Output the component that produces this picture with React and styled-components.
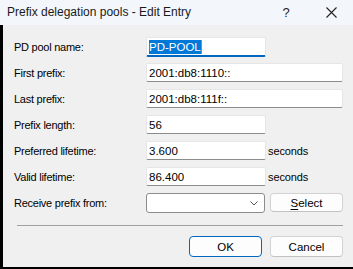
import React from "react";
import styled, { createGlobalStyle } from "styled-components";

const GlobalStyle = createGlobalStyle`
  html, body {
    margin: 0;
    padding: 0;
    background: #000;
  }
  body {
    font-family: "Liberation Sans", Arial, sans-serif;
    color: #000;
  }
`;

const Window = styled.div`
  width: 353px;
  height: 269px;
  display: flex;
  flex-direction: column;
  background: #000;
  overflow: hidden;
`;

const TitleBar = styled.div`
  height: 25px;
  display: flex;
  align-items: center;
  padding-left: 7px;
  background: #f3f6fb;
  color: #1a1a1a;
  font-size: 12px;
`;

const TitleText = styled.div`
  flex: 1;
  padding-bottom: 1px;
`;

const TitleButton = styled.div`
  width: ${({ $w }) => $w}px;
  display: flex;
  align-items: center;
  justify-content: center;
  font-size: 13px;
  color: #222;
  padding-bottom: 1px;
`;

const Body = styled.div`
  flex: 1;
  margin-left: 3px;
  margin-bottom: 2px;
  background: #f0f0f0;
  padding: 12px 10px 9px 11px;
  display: flex;
  flex-direction: column;
`;

const Form = styled.div`
  display: grid;
  grid-template-columns: 128px 120px 73px;
  column-gap: 4px;
  row-gap: 7px;
  grid-auto-rows: 19px;
  align-items: center;
`;

const Label = styled.div`
  font-size: 11px;
  letter-spacing: -0.25px;
  color: #000;
`;

const Field = styled.div`
  grid-column: ${({ $wide }) => ($wide ? "2 / span 2" : "2")};
  align-self: stretch;
  box-sizing: border-box;
  background: #fff;
  border: 1px solid #e6e6e6;
  border-bottom: ${({ $focus }) => ($focus ? "2px solid #0067c0" : "1px solid #8c8c8c")};
  border-radius: 2px;
  display: flex;
  align-items: center;
  padding-left: 2px;
  font-size: 11.5px;
  color: #000;
  height: ${({ $focus }) => ($focus ? "20px" : "19px")};
`;

const Selected = styled.span`
  background: #0078d7;
  color: #fff;
  line-height: 14px;
  border-right: 1px solid #e8742a;
`;

const Unit = styled.div`
  font-size: 11px;
  letter-spacing: -0.1px;
  margin-left: -2px;
`;

const Combo = styled.div`
  box-sizing: border-box;
  width: 119px;
  height: 20px;
  align-self: start;
  background: #fff;
  border: 1px solid #8c8c8c;
  border-radius: 3px;
  display: flex;
  align-items: center;
  justify-content: flex-end;
  padding-right: 6px;
`;

const Button = styled.div`
  box-sizing: border-box;
  width: 73px;
  height: ${({ $h }) => $h || 21}px;
  align-self: start;
  display: flex;
  align-items: center;
  justify-content: center;
  background: #fdfdfd;
  border: 1px solid ${({ $primary }) => ($primary ? "#0067c0" : "#d2d2d2")};
  border-bottom-color: ${({ $primary }) => ($primary ? "#0067c0" : "#c2c2c2")};
  border-radius: 4px;
  font-size: 11.5px;
  color: #000;
  u {
    text-decoration: underline;
    text-underline-offset: 2px;
  }
`;

const Separator = styled.div`
  height: 1px;
  background: #a0a0a0;
  margin: 13px 0 10px 3px;
`;

const Footer = styled.div`
  display: flex;
  justify-content: flex-end;
  gap: 8px;
`;

const Chevron = () => (
  <svg width="8" height="5" viewBox="0 0 8 5">
    <path d="M0.5 0.5 L4 4 L7.5 0.5" fill="none" stroke="#555" strokeWidth="1" />
  </svg>
);

const CloseIcon = () => (
  <svg width="11" height="11" viewBox="0 0 11 11">
    <path d="M0.5 0.5 L10.5 10.5 M10.5 0.5 L0.5 10.5" stroke="#222" strokeWidth="1.1" />
  </svg>
);

const rows = [
  { label: "First prefix:", value: "2001:db8:1110::", wide: true },
  { label: "Last prefix:", value: "2001:db8:111f::", wide: true },
  { label: "Prefix length:", value: "56" },
  { label: "Preferred lifetime:", value: "3.600", unit: "seconds" },
  { label: "Valid lifetime:", value: "86.400", unit: "seconds" },
];

export default function App() {
  return (
    <>
      <GlobalStyle />
      <Window>
        <TitleBar>
          <TitleText>Prefix delegation pools - Edit Entry</TitleText>
          <TitleButton $w={46}>?</TitleButton>
          <TitleButton $w={44}>
            <CloseIcon />
          </TitleButton>
        </TitleBar>
        <Body>
          <Form>
            <Label>PD pool name:</Label>
            <Field $focus>
              <Selected>PD-POOL</Selected>
            </Field>
            <div />
            {rows.map((r) => (
              <React.Fragment key={r.label}>
                <Label>{r.label}</Label>
                <Field $wide={r.wide}>{r.value}</Field>
                {!r.wide && (r.unit ? <Unit>{r.unit}</Unit> : <div />)}
              </React.Fragment>
            ))}
            <Label>Receive prefix from:</Label>
            <Combo>
              <Chevron />
            </Combo>
            <Button $h={19}>
              <span>
                <u>S</u>elect
              </span>
            </Button>
          </Form>
          <Separator />
          <Footer>
            <Button $primary>OK</Button>
            <Button>Cancel</Button>
          </Footer>
        </Body>
      </Window>
    </>
  );
}
